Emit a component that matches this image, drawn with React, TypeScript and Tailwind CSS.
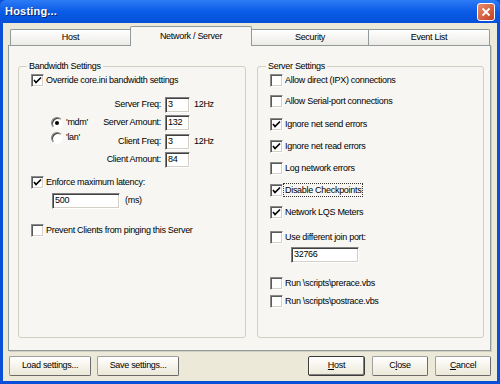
import React from 'react';

const font = "font-['Tahoma','Liberation_Sans',Arial,sans-serif]";

function Check({ on }: { on?: boolean }) {
  return (
    <span className="relative w-[13px] h-[13px] shrink-0 bg-white border-t border-l border-t-[#8a8a8a] border-l-[#8a8a8a] border-b border-r border-b-white border-r-white shadow-[inset_1px_1px_0_#5a5a5a,inset_-1px_-1px_0_#d4d0c8]">
      {on && (
        <svg viewBox="0 0 13 13" className="absolute -left-px -top-px w-[13px] h-[13px]">
          <path d="M3 6 L5 8.5 L10 3.5" fill="none" stroke="#000" strokeWidth="1.6" />
        </svg>
      )}
    </span>
  );
}

function Radio({ on }: { on?: boolean }) {
  return (
    <span className="relative w-[12px] h-[12px] shrink-0 rounded-full bg-white border border-t-[#808080] border-l-[#808080] border-b-white border-r-white shadow-[inset_1px_1px_0_#404040]">
      {on && <span className="absolute left-[3px] top-[3px] w-[4px] h-[4px] rounded-full bg-black" />}
    </span>
  );
}

function Field({ value, w }: { value: string; w: string }) {
  return (
    <span className={`${w} h-[16px] flex items-center pl-[2px] bg-white border-t border-l border-t-[#808080] border-l-[#808080] border-b border-r border-b-white border-r-white shadow-[inset_1px_1px_0_#404040,inset_-1px_-1px_0_#d4d0c8] text-black`}>
      {value}
    </span>
  );
}

function Row({ on, label, focus, cls }: { on?: boolean; label: string; focus?: boolean; cls: string }) {
  return (
    <div className={`flex items-center gap-[1px] h-[13px] leading-[13px] ${cls}`}>
      <Check on={on} />
      <span className={focus ? 'outline outline-1 outline-dotted outline-[#333] px-[1px] leading-[12px]' : 'px-[1px]'}>{label}</span>
    </div>
  );
}

function Btn({ label, w, def, u }: { label: string; w: string; def?: boolean; u?: number }) {
  const text = u === undefined ? label : (
    <>
      {label.slice(0, u)}<span className="underline">{label[u]}</span>{label.slice(u + 1)}
    </>
  );
  return (
    <button className={`${w} h-[20px] flex items-center justify-center rounded-[2px] bg-gradient-to-b from-white to-[#ECE9D8] border ${def ? 'border-[#3c3c3c] shadow-[inset_-1px_-1px_0_#808080,inset_1px_1px_0_#fff]' : 'border-[#a0a0a0] border-b-[#6b6b6b] border-r-[#6b6b6b]'} text-black`}>
      {text}
    </button>
  );
}

export default function App() {
  return (
    <div className={`w-[500px] h-[384px] flex flex-col bg-[#0A4FD8] ${font} text-[9px] tracking-[-0.3px] text-black overflow-hidden`}>
      {/* title bar */}
      <div className="h-[23px] shrink-0 flex items-center justify-between px-[5px] bg-gradient-to-b from-[#2C7BF6] via-[#0A5BE6] to-[#0550D8] rounded-t-[6px]">
        <span className="text-white font-bold text-[11px] tracking-[0.2px] [text-shadow:1px_1px_0_#0a246a]">Hosting...</span>
        <span className="w-[18px] h-[18px] rounded-[3px] border border-white bg-gradient-to-br from-[#E88B6C] to-[#C33E1C] flex items-center justify-center">
          <svg viewBox="0 0 10 10" className="w-[10px] h-[10px]">
            <path d="M1.5 1.5 L8.5 8.5 M8.5 1.5 L1.5 8.5" stroke="#fff" strokeWidth="1.8" />
          </svg>
        </span>
      </div>
      {/* body */}
      <div className="flex-1 mx-[3px] mb-[3px] bg-[#ECE9D8] flex flex-col px-[5px]">
        {/* tabs */}
        <div className="h-[19px] mt-[3px] flex items-end pl-[2px]">
          <div className="w-[120px] h-[16px] flex items-center justify-center border-t border-l border-[#919B9C] bg-gradient-to-b from-white to-[#ECEBE6] rounded-tl-[2px]">Host</div>
          <div className="relative z-10 -mb-px w-[122px] h-[20px] flex items-center justify-center border-t border-l border-r border-[#919B9C] bg-[#F7F6F2] rounded-t-[2px]">Network / Server</div>
          <div className="w-[117px] h-[16px] flex items-center justify-center border-t border-r border-[#919B9C] bg-gradient-to-b from-white to-[#ECEBE6]">Security</div>
          <div className="w-[121px] h-[16px] flex items-center justify-center border-t border-r border-[#919B9C] bg-gradient-to-b from-white to-[#ECEBE6] rounded-tr-[2px]">Event List</div>
        </div>
        {/* panel */}
        <div className="w-[483px] h-[306px] border border-[#919B9C] bg-[#F7F6F2] flex gap-[11px] pl-[9px] pt-[15px] shadow-[1px_1px_0_#D0CEBF]">
          {/* bandwidth */}
          <fieldset className="w-[228px] min-w-0 h-[277px] border border-[#D0D0BF] rounded-[3px] px-[12px]">
            <legend className="ml-[-4px] px-[2px] leading-[11px]">Bandwidth Settings</legend>
            <Row on cls="mt-[2px]" label="Override core.ini bandwidth settings" />
            <div className="flex mt-[9.5px]">
              <div className="w-[20px]" />
              <div className="w-[40px] flex flex-col gap-[2.5px] pt-[20.5px]">
                <div className="flex items-center gap-[3px] h-[12px]"><Radio on /><span>'mdm'</span></div>
                <div className="flex items-center gap-[3px] h-[12px]"><Radio /><span>'lan'</span></div>
              </div>
              <div className="grid grid-cols-[70px_25px_auto] gap-x-[4px] gap-y-[2.5px] items-center">
                <span className="text-right">Server Freq:</span><Field w="w-[25px]" value="3" /><span>12Hz</span>
                <span className="text-right">Server Amount:</span><Field w="w-[25px]" value="132" /><span />
                <span className="text-right">Client Freq:</span><Field w="w-[25px]" value="3" /><span>12Hz</span>
                <span className="text-right">Client Amount:</span><Field w="w-[25px]" value="84" /><span />
              </div>
            </div>
            <Row on cls="mt-[7.5px]" label="Enforce maximum latency:" />
            <div className="flex items-center gap-[5px] ml-[21px] mt-[4.5px]">
              <Field w="w-[68px]" value="500" /><span>(ms)</span>
            </div>
            <Row cls="mt-[15px]" label="Prevent Clients from pinging this Server" />
          </fieldset>
          {/* server */}
          <fieldset className="w-[227px] min-w-0 h-[277px] border border-[#D0D0BF] rounded-[3px] px-[12px]">
            <legend className="ml-[-4px] px-[2px] leading-[11px]">Server Settings</legend>
            <Row cls="mt-[2px]" label="Allow direct (IPX) connections" />
            <Row cls="mt-[7.5px]" label="Allow Serial-port connections" />
            <Row on cls="mt-[10px]" label="Ignore net send errors" />
            <Row on cls="mt-[9px]" label="Ignore net read errors" />
            <Row cls="mt-[9px]" label="Log network errors" />
            <Row on focus cls="mt-[9px]" label="Disable Checkpoints" />
            <Row on cls="mt-[9px]" label="Network LQS Meters" />
            <Row cls="mt-[12px]" label="Use different join port:" />
            <div className="ml-[21px] mt-[3.5px]"><Field w="w-[68px]" value="32766" /></div>
            <Row cls="mt-[13.5px]" label="Run \scripts\prerace.vbs" />
            <Row cls="mt-[5.5px]" label="Run \scripts\postrace.vbs" />
          </fieldset>
        </div>
        {/* buttons */}
        <div className="flex items-center mt-[5px] pl-[1px] pr-[1px]">
          <div className="flex gap-[6px]">
            <Btn w="w-[82px]" label="Load settings..." />
            <Btn w="w-[82px]" label="Save settings..." />
          </div>
          <div className="ml-auto flex gap-[7px]">
            <Btn w="w-[57px]" def label="Host" u={0} />
            <Btn w="w-[56px]" label="Close" u={1} />
            <Btn w="w-[56px]" label="Cancel" u={0} />
          </div>
        </div>
      </div>
    </div>
  );
}
